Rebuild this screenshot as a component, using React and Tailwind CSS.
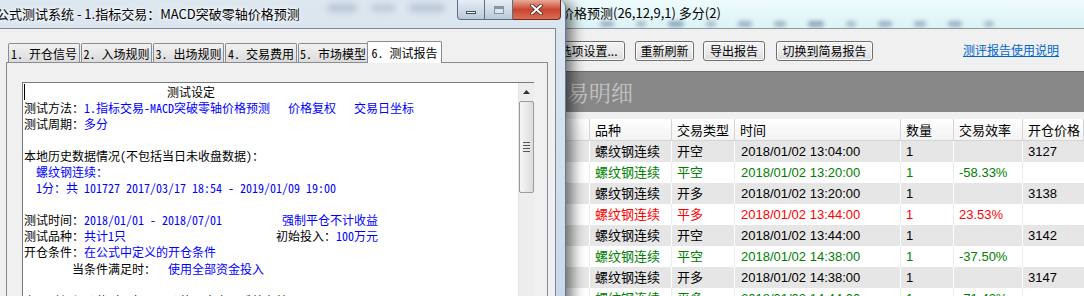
import React from "react";

const rows = [
  ["开空", "2018/01/02 13:04:00", "1", "", "3127", "k"],
  ["平空", "2018/01/02 13:20:00", "1", "-58.33%", "", "g"],
  ["开多", "2018/01/02 13:20:00", "1", "", "3138", "k"],
  ["平多", "2018/01/02 13:44:00", "1", "23.53%", "", "r"],
  ["开空", "2018/01/02 13:44:00", "1", "", "3142", "k"],
  ["平空", "2018/01/02 14:38:00", "1", "-37.50%", "", "g"],
  ["开多", "2018/01/02 14:38:00", "1", "", "3147", "k"],
  ["平多", "2018/01/02 14:44:00", "1", "-71.43%", "", "g"],
];

const tone = { k: "text-black", g: "text-[#008000]", r: "text-[#ff0000]" };

// 背景窗口：交易明细
function ReportWindow() {
  return (
    <div className="absolute left-0 top-0 w-[1084px] h-[296px] flex flex-col bg-[#f0f0f0] font-['Noto_Sans_CJK_SC',sans-serif]">
      <div className="relative h-[29px] shrink-0 bg-gradient-to-b from-[#eefbfc] to-[#dcf3f5] border-b border-[#8d9aa3] overflow-hidden">
        <div className="absolute left-[600px] top-[21px] flex gap-[22px] blur-[2px]">
          <span className="w-[14px] h-[6px] rounded-full bg-[#9bb3c4]" />
          <span className="w-[10px] h-[6px] rounded-full bg-[#a7bccb]" />
          <span className="w-[16px] h-[6px] rounded-full bg-[#8ea8bb]" />
          <span className="w-[10px] h-[6px] rounded-full bg-[#a7bccb]" />
          <span className="w-[14px] h-[6px] rounded-full bg-[#9bb3c4]" />
          <span className="w-[12px] h-[6px] rounded-full bg-[#a0b6c6]" />
          <span className="w-[16px] h-[6px] rounded-full bg-[#8ea8bb]" />
          <span className="w-[10px] h-[6px] rounded-full bg-[#a7bccb]" />
          <span className="w-[14px] h-[6px] rounded-full bg-[#9bb3c4]" />
          <span className="w-[12px] h-[6px] rounded-full bg-[#a0b6c6]" />
          <span className="w-[14px] h-[6px] rounded-full bg-[#9bb3c4]" />
          <span className="w-[10px] h-[6px] rounded-full bg-[#a7bccb]" />
        </div>
        <div className="relative pl-[561px] pt-[5px] text-[13px] leading-[16px] text-black">
          价格预测(26,12,9,1) 多分(2)
        </div>
      </div>

      <div className="h-[42px] shrink-0 flex items-start pt-[12px] pl-[552px] text-[12px]">
        <Btn className="w-[73px]">选项设置...</Btn>
        <Btn className="w-[59px] ml-[10px]">重新刷新</Btn>
        <Btn className="w-[62px] ml-[9px]">导出报告</Btn>
        <Btn className="w-[97px] ml-[11px]">切换到简易报告</Btn>
        <a className="ml-[90px] mt-[1px] text-[12px] leading-[16px] text-[#0066cc] underline">测评报告使用说明</a>
      </div>

      <div className="h-[41px] shrink-0 bg-[#888888] border-t border-[#6c6c6c] pl-[545px] pt-[6px] text-[22px] leading-[28px] text-[#c4c4c4] font-['Noto_Serif_CJK_SC','Noto_Sans_CJK_SC',serif]">
        交易明细
      </div>
      <div className="h-[7px] shrink-0 bg-[#f0f0f0]" />

      <div className="grid grid-cols-[590px_82px_63px_166px_53px_69px_1fr] h-[22px] shrink-0 bg-gradient-to-b from-white to-[#f3f3f3] border-b border-[#d5d5d5] text-[13px] leading-[21px] text-black">
        {["", "品种", "交易类型", "时间", "数量", "交易效率", "开仓价格"].map((h, i) => (
          <div key={i} className="pl-[5px] border-r border-[#d5d5d5] whitespace-nowrap">{h}</div>
        ))}
      </div>

      {rows.map((r, i) => {
        const gray = i % 2 === 0;
        const line = gray ? "border-white" : "border-[#ececec]";
        return (
          <div
            key={i}
            className={`grid grid-cols-[590px_82px_63px_166px_53px_69px_1fr] h-[21px] shrink-0 text-[13px] leading-[21px] font-['Liberation_Sans','Noto_Sans_CJK_SC',sans-serif] ${gray ? "bg-[#e6e6e6]" : "bg-white"} ${tone[r[5]]}`}
          >
            <div className={`border-r ${line}`} />
            <div className={`pl-[5px] border-r ${line}`}>螺纹钢连续</div>
            <div className={`pl-[5px] border-r ${line}`}>{r[0]}</div>
            <div className={`pl-[6px] border-r ${line}`}>{r[1]}</div>
            <div className={`pl-[5px] border-r ${line}`}>{r[2]}</div>
            <div className={`pl-[5px] border-r ${line}`}>{r[3]}</div>
            <div className="pl-[5px]">{r[4]}</div>
          </div>
        );
      })}
    </div>
  );
}

function Btn({ className, children }) {
  return (
    <div
      className={`h-[20px] rounded-[3px] border border-[#707070] bg-gradient-to-b from-[#f4f4f4] via-[#ebebeb] to-[#dcdcdc] shadow-[inset_0_0_0_1px_#fcfcfc] text-center leading-[18px] text-black whitespace-nowrap ${className}`}
    >
      {children}
    </div>
  );
}

function Tab({ className, active, children }) {
  return (
    <div
      className={`whitespace-nowrap text-center border border-[#898c95] border-b-0 rounded-t-[2px] ${
        active
          ? "h-[22px] bg-white z-10 mb-[-1px] leading-[22px]"
          : "h-[19px] bg-gradient-to-b from-[#f2f2f2] to-[#dbdbdb] leading-[19px]"
      } ${className}`}
    >
      {children}
    </div>
  );
}

const B = ({ children }) => <span className="text-[#0000ff]">{children}</span>;

// 前景窗口：公式测试系统
function TestDialog() {
  return (
    <div className="absolute left-0 top-0 w-[566px] h-[320px] flex flex-col rounded-tr-[7px] bg-gradient-to-b from-[#dde7f0] to-[#c8d8e8] border-r border-[#5f7a96] shadow-[6px_2px_14px_rgba(0,0,0,0.55)]">
      <div className="relative h-[28px] shrink-0">
        <div className="absolute right-[120px] top-[4px] flex gap-[14px] blur-[3px] opacity-60">
          <span className="w-[30px] h-[8px] rounded-full bg-[#9fb0c2]" />
          <span className="w-[24px] h-[8px] rounded-full bg-[#aab9c8]" />
          <span className="w-[36px] h-[8px] rounded-full bg-[#9fb0c2]" />
        </div>
        <div className="relative ml-[-4px] pt-[6px] text-[13px] leading-[16px] text-black font-['Noto_Sans_CJK_SC',sans-serif] [text-shadow:0_0_6px_#fff,0_0_3px_#fff]">
          公式测试系统 - 1.指标交易：MACD突破零轴价格预测
        </div>
        <div className="absolute left-[457px] top-0 flex">
          <div className="w-[28px] h-[20px] rounded-bl-[4px] border border-t-0 border-[#5c6f85] bg-gradient-to-b from-[#e6edf4] via-[#d2dce8] to-[#b9c8d8] flex items-end justify-center pb-[5px]">
            <span className="w-[10px] h-[3px] bg-white border border-[#3d4d60]" />
          </div>
          <div className="w-[28px] h-[20px] border border-t-0 border-l-0 border-[#5c6f85] bg-gradient-to-b from-[#e6edf4] via-[#d2dce8] to-[#b9c8d8] flex items-center justify-center">
            <span className="w-[10px] h-[8px] border border-[#8494a6] bg-[#dfe6ee] shadow-[inset_0_2px_0_#8494a6]" />
          </div>
          <div className="w-[48px] h-[20px] rounded-br-[4px] border border-t-0 border-l-0 border-[#6b2a20] bg-gradient-to-b from-[#e9a899] via-[#c9452f] to-[#d96d52] flex items-center justify-center">
            <svg width="13" height="11" viewBox="0 0 13 11">
              <path d="M2 1.5 L11 9.5 M11 1.5 L2 9.5" stroke="#3a1a14" strokeWidth="3.6" strokeLinecap="round" />
              <path d="M2 1.5 L11 9.5 M11 1.5 L2 9.5" stroke="#ffffff" strokeWidth="2.2" strokeLinecap="round" />
            </svg>
          </div>
        </div>
      </div>

      <div className="flex-1 mr-[9px] bg-[#f0f0f0] border-t border-r border-[#7d8894] flex flex-col font-['Noto_Sans_Mono_CJK_SC','Noto_Sans_CJK_SC','Liberation_Mono',monospace] text-[12px] text-black">
        <div className="flex items-end h-[33px] pl-[8px] shrink-0">
          <Tab className="w-[72px]">1. 开仓信号</Tab>
          <Tab className="w-[71px] ml-[1px]">2. 入场规则</Tab>
          <Tab className="w-[71px] ml-[1px]">3. 出场规则</Tab>
          <Tab className="w-[72px] ml-[1px]">4. 交易费用</Tab>
          <Tab className="w-[70px] ml-[1px]">5. 市场模型</Tab>
          <Tab className="w-[75px] ml-[-1px]" active>6. 测试报告</Tab>
        </div>

        <div className="ml-[6px] w-[542px] flex-1 border border-[#898c95] bg-[#f0f0f0] pt-[19px] pl-[15px] pr-[13px]">
          <div className="h-full flex border-l border-t border-[#7a7a7a] bg-white">
            <div className="flex-1 pl-[1px] pt-[1px] leading-[16px] whitespace-pre">
              <div className="flex items-center h-[16px]">
                <span className="w-[1px] h-[16px] bg-black" />
                <span className="ml-[142px]">测试设定</span>
              </div>
              <div>测试方法：<B>1.指标交易-MACD突破零轴价格预测   价格复权   交易日坐标</B></div>
              <div>测试周期：<B>多分</B></div>
              <div className="h-[16px]" />
              <div>本地历史数据情况(不包括当日未收盘数据)：</div>
              <div><B>  螺纹钢连续：</B></div>
              <div><B>  1分：共 101727 2017/03/17 18:54 - 2019/01/09 19:00</B></div>
              <div className="h-[16px]" />
              <div>测试时间：<B>2018/01/01 - 2018/07/01          强制平仓不计收益</B></div>
              <div>测试品种：<B>共计1只</B>                         初始投入：<B>100万元</B></div>
              <div>开仓条件：<B>在公式中定义的开仓条件</B></div>
              <div className="mt-[1px]">        当条件满足时：  <B>使用全部资金投入</B></div>
              <div className="h-[16px]" />
              <div>交易时机与价位(仅对PRICE价格图表交易系统有效)</div>
            </div>

            <div className="w-[16px] bg-[#ededed] border-l border-[#e3e3e3] flex flex-col items-center">
              <div className="h-[18px] w-full flex items-center justify-center">
                <svg width="7" height="4" viewBox="0 0 7 4">
                  <path d="M0 4 L3.5 0 L7 4 Z" fill="#333" />
                </svg>
              </div>
              <div className="w-[15px] h-[92px] rounded-[2px] border border-[#9a9a9a] bg-gradient-to-r from-[#f6f6f6] to-[#dcdcdc] flex flex-col items-center justify-center gap-[2px]">
                <span className="w-[7px] h-[1px] bg-[#555]" />
                <span className="w-[7px] h-[1px] bg-[#555]" />
                <span className="w-[7px] h-[1px] bg-[#555]" />
                <span className="w-[7px] h-[1px] bg-[#555]" />
              </div>
            </div>
          </div>
        </div>
      </div>
    </div>
  );
}

export default function App() {
  return (
    <div className="relative w-[1084px] h-[296px] overflow-hidden bg-white">
      <ReportWindow />
      <TestDialog />
    </div>
  );
}
